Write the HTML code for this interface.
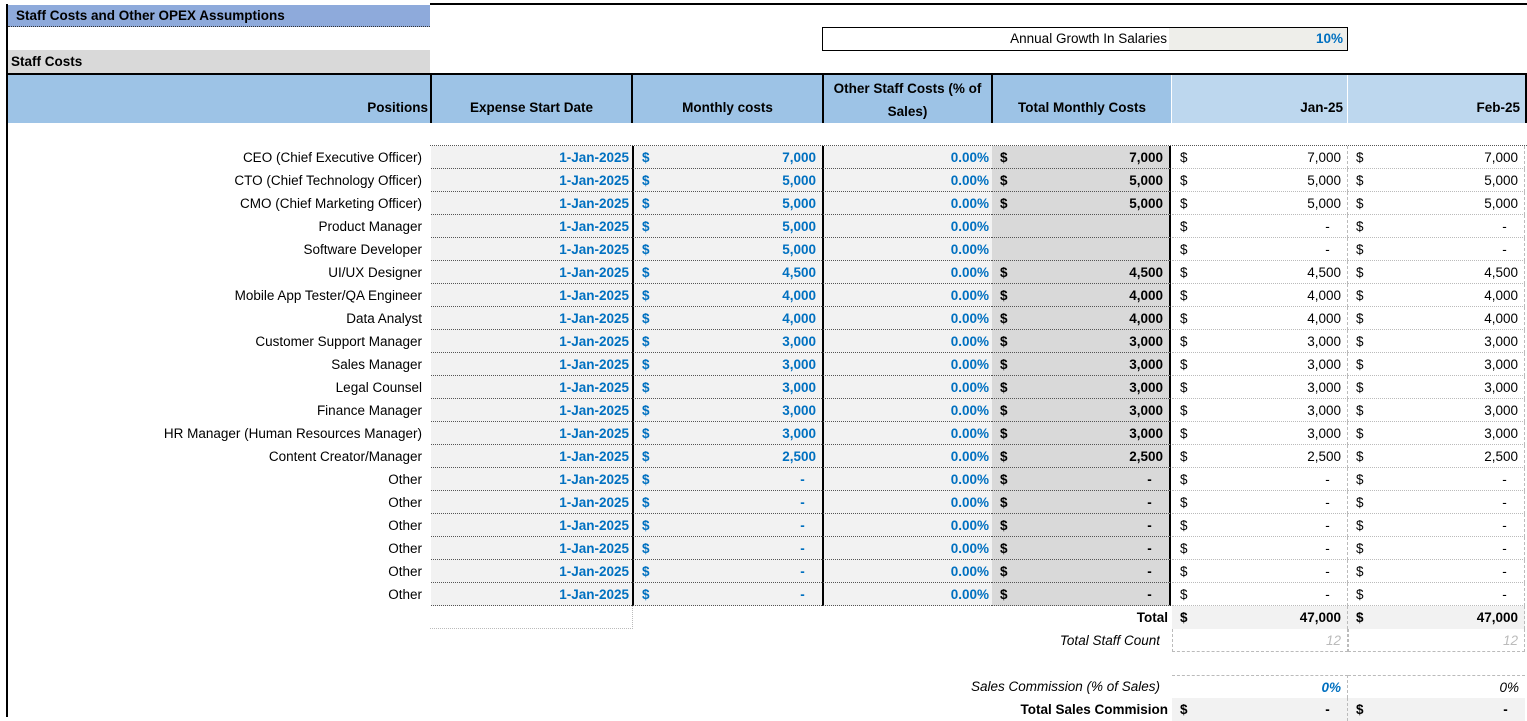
<!DOCTYPE html>
<html><head><meta charset="utf-8"><style>
*{box-sizing:border-box;margin:0;padding:0}
body{width:1527px;height:717px;background:#fff;font-family:"Liberation Sans",sans-serif;font-size:13.5px;color:#000;position:relative;overflow:hidden}
.a{position:absolute}
.r{position:absolute;left:0;height:23px;width:1527px}
.c{position:absolute;top:0;height:23px;line-height:23px;white-space:nowrap;overflow:hidden}
.in{background:#f2f2f2;border-bottom:1px dotted #555}
.blue{color:#0070c0;font-weight:bold}
.b{font-weight:bold}
.rt{text-align:right;padding-right:3px}
.d{position:absolute;left:8px}
.v{position:absolute;right:6px}
</style></head><body>
<div class="a" style="left:6px;top:4px;width:2px;height:713px;background:#000"></div>
<div class="a" style="left:430px;top:3px;width:1097px;height:2px;background:#000"></div>
<div class="a" style="left:8px;top:5px;width:422px;height:22px;background:#8eaadb;border-bottom:1px dotted #333;font-weight:bold;line-height:22px;padding-left:8px;font-size:13.5px">Staff Costs and Other OPEX Assumptions</div>
<div class="a" style="left:822px;top:27px;width:526px;height:24px;border:1px solid #000"></div>
<div class="a" style="left:823px;top:28px;width:346px;height:22px;line-height:22px;text-align:right;padding-right:2px">Annual Growth In Salaries</div>
<div class="a blue" style="left:1169px;top:28px;width:178px;height:22px;line-height:22px;text-align:right;padding-right:4px;background:#eeeeea;font-weight:bold">10%</div>
<div class="a" style="left:8px;top:50px;width:422px;height:23px;background:#d9d9d9;font-weight:bold;line-height:24px;padding-left:3px">Staff Costs</div>
<div class="a" style="left:8px;top:73px;width:1519px;height:2px;background:#000"></div>
<!-- header -->
<div class="a" style="left:8px;top:75px;width:1163px;height:48px;background:#9dc3e6"></div>
<div class="a" style="left:1171px;top:75px;width:356px;height:48px;background:#bdd7ee"></div>
<div class="a" style="left:430px;top:75px;width:2px;height:48px;background:#000"></div>
<div class="a" style="left:631px;top:75px;width:2px;height:48px;background:#000"></div>
<div class="a" style="left:822px;top:75px;width:2px;height:48px;background:#000"></div>
<div class="a" style="left:991px;top:75px;width:2px;height:48px;background:#000"></div>
<div class="a" style="left:1171px;top:75px;width:1px;height:48px;background:#fff"></div>
<div class="a" style="left:1347px;top:75px;width:1px;height:48px;background:#fff"></div>
<div class="a" style="left:1525px;top:75px;width:2px;height:48px;background:#000"></div>
<div class="a b" style="left:8px;top:100px;width:420px;text-align:right">Positions</div>
<div class="a b" style="left:432px;top:100px;width:199px;text-align:center">Expense Start Date</div>
<div class="a b" style="left:633px;top:100px;width:189px;text-align:center">Monthly costs</div>
<div class="a b" style="left:824px;top:77px;width:167px;text-align:center;line-height:23px">Other Staff Costs (% of Sales)</div>
<div class="a b" style="left:993px;top:100px;width:178px;text-align:center">Total Monthly Costs</div>
<div class="a b" style="left:1172px;top:100px;width:171px;text-align:right">Jan-25</div>
<div class="a b" style="left:1348px;top:100px;width:172px;text-align:right">Feb-25</div>
<div class="a" style="left:430px;top:145px;width:1097px;border-top:1px dotted #555"></div>
<div id="rows"></div>
<script>
var d=[["CEO (Chief Executive Officer)","7,000",1],["CTO (Chief Technology Officer)","5,000",1],["CMO (Chief Marketing Officer)","5,000",1],["Product Manager","5,000",0],["Software Developer","5,000",0],["UI/UX Designer","4,500",1],["Mobile App Tester/QA Engineer","4,000",1],["Data Analyst","4,000",1],["Customer Support Manager","3,000",1],["Sales Manager","3,000",1],["Legal Counsel","3,000",1],["Finance Manager","3,000",1],["HR Manager (Human Resources Manager)","3,000",1],["Content Creator/Manager","2,500",1],["Other","-",1],["Other","-",1],["Other","-",1],["Other","-",1],["Other","-",1],["Other","-",1]];
var h="";
d.forEach(function(x,i){
var t=146+i*23;var v=x[1]=="-"?"-&nbsp;&nbsp;&nbsp;":x[1];
var fv=x[2]?v:"-&nbsp;&nbsp;&nbsp;";
h+='<div class="r" style="top:'+t+'px">'+
'<div class="c" style="left:8px;width:422px;text-align:right;padding-right:8px">'+x[0]+'</div>'+
'<div class="c in blue rt" style="left:431px;width:201px">1-Jan-2025</div>'+
'<div class="c in blue" style="left:632px;width:190px;border-left:2px solid #000"><span class="d">$</span><span class="v">'+v+'</span></div>'+
'<div class="c in blue rt" style="left:822px;width:170px;border-left:2px solid #000">0.00%</div>'+
'<div class="c b" style="left:992px;width:179px;background:#d9d9d9;border-bottom:1px dotted #555;border-right:2px solid #000">'+(x[2]?'<span class="d">$</span><span class="v">'+v+'</span>':'')+'</div>'+
'<div class="c" style="left:1172px;width:176px;border-bottom:1px dotted #bbb;border-right:1px dashed #bbb"><span class="d">$</span><span class="v">'+fv+'</span></div>'+
'<div class="c" style="left:1348px;width:177px;border-bottom:1px dotted #bbb;border-right:1px dashed #bbb"><span class="d">$</span><span class="v">'+fv+'</span></div>'+
'</div>';});
document.getElementById("rows").innerHTML=h;
</script>
<div class="a" style="left:430px;top:606px;width:203px;height:23px;border-bottom:1px dotted #bbb;border-right:1px dotted #bbb"></div>
<div class="r" style="top:606px">
<div class="c b" style="left:993px;width:175px;text-align:right">Total</div>
<div class="c b" style="left:1172px;width:176px;background:#f2f2f2;border-right:1px dashed #bbb"><span class="d">$</span><span class="v">47,000</span></div>
<div class="c b" style="left:1348px;width:177px;background:#f2f2f2;border-right:1px dashed #bbb"><span class="d">$</span><span class="v">47,000</span></div>
</div>
<div class="r" style="top:629px">
<div class="c" style="left:900px;width:260px;text-align:right;font-style:italic">Total Staff Count</div>
<div class="c" style="left:1172px;width:176px;border:1px dashed #bbb;border-top:none;text-align:right;padding-right:6px;color:#bbb;font-style:italic">12</div>
<div class="c" style="left:1348px;width:177px;border:1px dashed #bbb;border-top:none;text-align:right;padding-right:6px;color:#bbb;font-style:italic">12</div>
</div>
<div class="r" style="top:675px">
<div class="c" style="left:850px;width:310px;text-align:right;font-style:italic">Sales Commission (% of Sales)</div>
<div class="c" style="left:1172px;width:176px;border-top:1px dashed #bbb;border-right:1px dashed #bbb;text-align:right;padding-right:6px;color:#0070c0;font-weight:bold;font-style:italic">0%</div>
<div class="c" style="left:1348px;width:177px;border-top:1px dashed #bbb;text-align:right;padding-right:6px;font-style:italic">0%</div>
</div>
<div class="r" style="top:698px">
<div class="c b" style="left:900px;width:268px;text-align:right">Total Sales Commision</div>
<div class="c b" style="left:1172px;width:176px;background:#f2f2f2;border-right:1px dashed #bbb"><span class="d">$</span><span class="v">-&nbsp;&nbsp;&nbsp;</span></div>
<div class="c b" style="left:1348px;width:177px;background:#f2f2f2"><span class="d">$</span><span class="v">-&nbsp;&nbsp;&nbsp;</span></div>
</div>
</body></html>
